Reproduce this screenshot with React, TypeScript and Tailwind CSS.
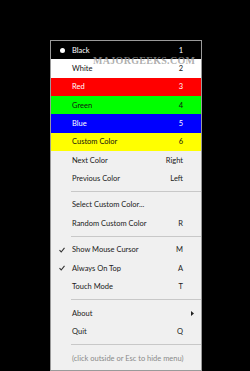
const ROW = "flex h-[18.33px] items-center whitespace-nowrap";

type Item = {
  label: string;
  key?: string;
  bg?: string;
  text?: string;
  mark?: "dot" | "check";
  arrow?: boolean;
};

function Row({ item }: { item: Item }) {
  return (
    <div className={`${ROW} ${item.bg ?? ""} ${item.text ?? "text-[#1a1a1a]"}`}>
      <div className="flex w-[21px] shrink-0 justify-center pl-[1px]">
        {item.mark === "dot" && <span className="h-[5px] w-[5px] rounded-full bg-white" />}
        {item.mark === "check" && (
          <svg width="6" height="6" viewBox="0 0 6 6" className="text-[#333]">
            <path d="M0.5 3.2 L2.2 5 L5.5 0.8" fill="none" stroke="currentColor" strokeWidth="1.1" />
          </svg>
        )}
      </div>
      <span className="min-w-0 flex-1">{item.label}</span>
      {item.key && <span className="w-[40px] shrink-0 text-right">{item.key}</span>}
      <div className="flex w-[18px] shrink-0 justify-end pr-[7px]">
        {item.arrow && (
          <svg width="3" height="5" viewBox="0 0 3 5">
            <path d="M0 0 L3 2.5 L0 5 Z" fill="#222" />
          </svg>
        )}
      </div>
    </div>
  );
}

function Sep() {
  return (
    <div className="flex h-[8.33px] items-center pl-[20px]">
      <div className="h-[2px] w-full border-t border-[#c8c8c8] border-b-white" />
    </div>
  );
}

const colors: Item[] = [
  { label: "Black", key: "1", bg: "bg-black", text: "text-white", mark: "dot" },
  { label: "White", key: "2", bg: "bg-white", text: "text-[#111]" },
  { label: "Red", key: "3", bg: "bg-[#ff0000]", text: "text-white" },
  { label: "Green", key: "4", bg: "bg-[#00ff00]", text: "text-[#111]" },
  { label: "Blue", key: "5", bg: "bg-[#0000ff]", text: "text-white" },
  { label: "Custom Color", key: "6", bg: "bg-[#ffff00]", text: "text-[#111]" },
  { label: "Next Color", key: "Right" },
  { label: "Previous Color", key: "Left" },
];

export default function App() {
  return (
    <div className="relative h-[371px] w-[250px] overflow-hidden bg-black pt-[40px] font-['Lato',sans-serif] text-[7.5px]">
      <div className="ml-[50px] flex w-[152px] flex-col border border-[#9a9a9a] bg-[#f0f0f0] pb-[2px]">
        {colors.map((c) => (
          <Row key={c.label} item={c} />
        ))}
        <Sep />
        <Row item={{ label: "Select Custom Color..." }} />
        <Row item={{ label: "Random Custom Color", key: "R" }} />
        <Sep />
        <Row item={{ label: "Show Mouse Cursor", key: "M", mark: "check" }} />
        <Row item={{ label: "Always On Top", key: "A", mark: "check" }} />
        <Row item={{ label: "Touch Mode", key: "T" }} />
        <Sep />
        <Row item={{ label: "About", arrow: true }} />
        <Row item={{ label: "Quit", key: "Q" }} />
        <Sep />
        <Row item={{ label: "(click outside or Esc to hide menu)", text: "text-[#8a8a8a]" }} />
      </div>
      <div className="pointer-events-none absolute left-[93px] top-[53px] font-['Liberation_Serif',serif] text-[10px] font-bold tracking-[0.3px] text-[#9a9a9a]/80">
        MAJORGEEKS.COM
      </div>
    </div>
  );
}
